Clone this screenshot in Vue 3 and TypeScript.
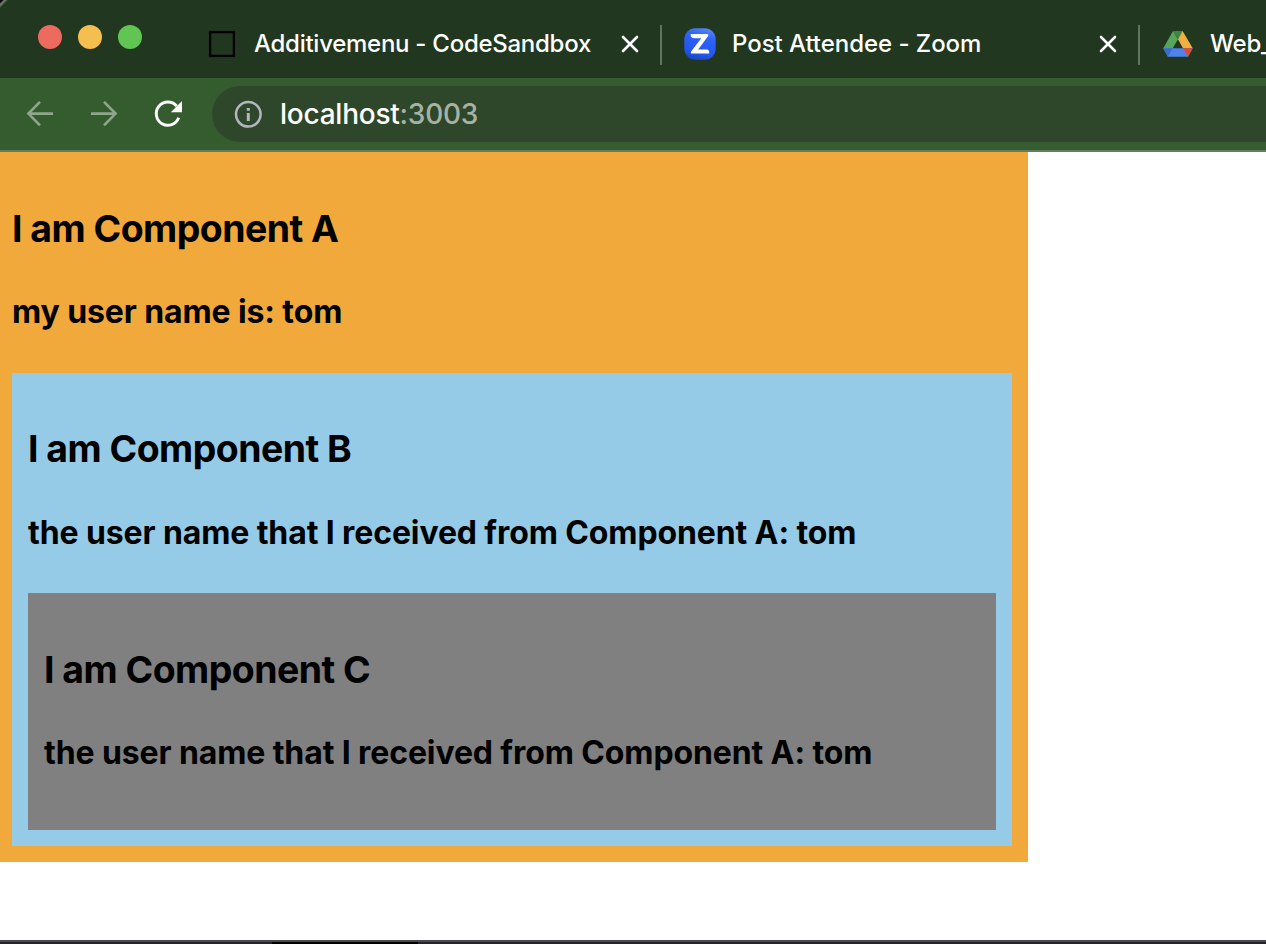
<script setup lang="ts">
interface Tab {
  id: string
  title: string
}

const tabs: Tab[] = [
  { id: 'sandbox', title: 'Additivemenu - CodeSandbox' },
  { id: 'zoom', title: 'Post Attendee - Zoom' },
  { id: 'drive', title: 'Web_' },
]
const userName = 'tom'
</script>

<template>
  <div class="window">
    <header class="tab-bar">
      <div class="lights">
        <span class="light red"></span>
        <span class="light yellow"></span>
        <span class="light green"></span>
      </div>
      <div v-for="tab in tabs" :key="tab.id" class="tab" :class="tab.id">
        <svg v-if="tab.id === 'sandbox'" class="favicon" viewBox="0 0 32 32">
          <rect x="4.1" y="4.1" width="23.8" height="23.8" fill="none" stroke="#000" stroke-width="2.3" />
        </svg>
        <svg v-else-if="tab.id === 'zoom'" class="favicon" viewBox="0 0 32 32">
          <defs>
            <linearGradient id="zoomBlue" x1="0.7" y1="0" x2="0.4" y2="1">
              <stop offset="0" stop-color="#5585f5" />
              <stop offset="0.3" stop-color="#2b62f6" />
              <stop offset="0.75" stop-color="#2457f0" />
              <stop offset="1" stop-color="#1c48c4" />
            </linearGradient>
          </defs>
          <rect x="0.3" y="0.3" width="31.4" height="31.4" rx="11" fill="url(#zoomBlue)" />
          <path d="M6.5 6H23Q25 6 24 8.2L14.2 21.5H23Q25.3 21.5 25.3 25.6H8.3Q5.8 25.6 7.3 23.2L17.3 10.2H10.5Q6.5 10.2 6.5 6Z" fill="#fff" />
        </svg>
        <svg v-else class="favicon" viewBox="0 0 32 32">
          <path d="M11 3 1.3 20.3 6 28.5 16 11.2Z" fill="#57a55a" />
          <path d="M11 3h10l-5 8.2Z" fill="#3d8544" />
          <path d="M20.6 3 16 11.2 21 20.3h9.7Z" fill="#efb041" />
          <path d="M1.3 20.3h29.4L26 28.8H6Z" fill="#4f83ea" />
          <path d="M1.3 20.3H10.5L6 28.8Z" fill="#3a6bd3" />
          <path d="M21 20.3h9.7L26 28.8Z" fill="#db4c36" />
        </svg>
        <span class="title">{{ tab.title }}</span>
        <svg v-if="tab.id !== 'drive'" class="close" viewBox="0 0 20 20">
          <path d="M3 3 17 17M17 3 3 17" stroke="#fff" stroke-width="2.6" stroke-linecap="round" />
        </svg>
      </div>
    </header>

    <nav class="toolbar">
      <svg class="nav-icon" viewBox="0 0 32 32">
        <path d="M29 15.6H4.5M16 3.8 4.4 15.6 16 27.4" fill="none" stroke="#8fa58c" stroke-width="2.6" />
      </svg>
      <svg class="nav-icon" viewBox="0 0 32 32">
        <path d="M3 15.6H27.5M16 3.8 27.6 15.6 16 27.4" fill="none" stroke="#8fa58c" stroke-width="2.6" />
      </svg>
      <svg class="nav-icon" viewBox="0 0 32 32">
        <path d="M26.7 19.8A11.6 11.6 0 1 1 24.6 8" fill="none" stroke="#fff" stroke-width="2.9" />
        <path d="M30 3V14.2H18.8Z" fill="#fff" />
      </svg>
      <div class="address">
        <svg class="info" viewBox="0 0 28 28">
          <circle cx="14.3" cy="14.3" r="12.3" fill="none" stroke="#b3b6bd" stroke-width="2.5" />
          <path d="M14.3 12.9V21M14.3 8V10.8" stroke="#b3b6bd" stroke-width="3" />
        </svg>
        <span class="host">localhost</span><span class="port">:3003</span>
      </div>
    </nav>

    <main class="page">
      <section class="box a">
        <h3>I am Component A</h3>
        <h4>my user name is: {{ userName }}</h4>
        <section class="box b">
          <h3>I am Component B</h3>
          <h4>the user name that I received from Component A: {{ userName }}</h4>
          <section class="box c">
            <h3>I am Component C</h3>
            <h4>the user name that I received from Component A: {{ userName }}</h4>
          </section>
        </section>
      </section>
    </main>

    <footer class="edge"><span class="edge-mark"></span></footer>
  </div>
</template>

<style>
html,
body {
  margin: 0;
  overflow: hidden;
  background: #fff;
}
</style>

<style scoped>
.window {
  width: 1266px;
  height: 944px;
  display: flex;
  flex-direction: column;
  overflow: hidden;
  font-family: Inter, 'Liberation Sans', sans-serif;
  color: #000;
  background: #fff;
}

.tab-bar {
  display: flex;
  flex: none;
  height: 78px;
  background: linear-gradient(135deg, #000 2px, #6b7a69 3px, #6b7a69 4px, #21371f 6px);
}

.lights {
  display: flex;
  flex: none;
  gap: 16px;
  width: 144px;
  padding: 25px 0 0 38px;
}

.light {
  width: 24px;
  height: 24px;
  border-radius: 50%;
}

.red {
  background: #ed6a5e;
}

.yellow {
  background: #f5bf4f;
}

.green {
  background: #61c554;
}

.tab {
  position: relative;
  display: flex;
  flex: none;
  align-items: center;
  box-sizing: border-box;
  width: 478px;
  height: 88px;
  padding-left: 22px;
}

.tab.sandbox {
  margin-left: 2px;
}

.tab.zoom::before,
.tab.zoom::after {
  content: '';
  position: absolute;
  top: 25px;
  left: -2px;
  width: 2px;
  height: 40px;
  background: #5f755d;
}

.tab.zoom::after {
  left: 476px;
}

.tab.drive {
  width: 126px;
}

.favicon {
  flex: none;
  width: 32px;
  height: 32px;
}

.title {
  flex: 1;
  margin-left: 16px;
  font-size: 24px;
  font-weight: 500;
  letter-spacing: -0.27px;
  line-height: 30px;
  color: #fff;
  white-space: nowrap;
}

.zoom .title {
  letter-spacing: -0.05px;
}

.close {
  position: absolute;
  left: 436px;
  top: 34px;
  width: 20px;
  height: 20px;
}

.toolbar {
  display: flex;
  flex: none;
  align-items: center;
  box-sizing: border-box;
  gap: 32px;
  height: 74px;
  padding-left: 24px;
  background: #355c2f;
  border-bottom: 2px solid #5f7f5b;
}

.nav-icon {
  flex: none;
  width: 32px;
  height: 32px;
}

.address {
  display: flex;
  flex: 1;
  align-items: center;
  height: 56px;
  margin-left: -4px;
  padding-left: 22px;
  border-radius: 28px 0 0 28px;
  background: #2e472b;
  font-size: 28px;
  font-weight: 500;
  letter-spacing: -0.24px;
  white-space: nowrap;
}

.info {
  width: 28px;
  height: 28px;
  margin-right: 18px;
}

.host {
  color: #fff;
}

.port {
  color: #a6b3a4;
}

.page {
  flex: 1;
  min-height: 0;
}

.box {
  box-sizing: border-box;
  padding: 16px;
  display: flow-root;
}

.a {
  width: 1028px;
  padding-left: 12px;
  background: #f1a93c;
}

.b {
  background: #96cbe8;
}

.c {
  background: #808080;
}

h3,
h4 {
  font-weight: 700;
  white-space: nowrap;
}

h3 {
  margin: 38.64px 0 42.16px;
  font-size: 37.44px;
  letter-spacing: -0.52px;
  line-height: 44.5px;
}

h4 {
  margin: 0 0 41.76px;
  font-size: 32px;
  letter-spacing: -0.11px;
  line-height: 37.5px;
}

.edge {
  display: flex;
  flex: none;
  box-sizing: border-box;
  height: 4px;
  padding-left: 272px;
  border-top: 2px solid #4a494d;
  background: #242327;
}

.edge-mark {
  width: 146px;
  background: #000;
}
</style>
